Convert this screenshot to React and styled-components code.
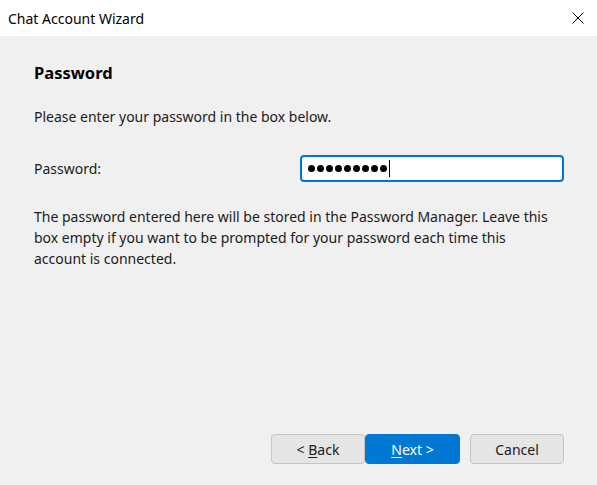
import React from "react";
import styled, { createGlobalStyle } from "styled-components";

const Global = createGlobalStyle`
  html, body { margin: 0; padding: 0; height: 100%; }
  body { background: #f0f0f0; font-family: "Noto Sans", "Open Sans", sans-serif; color: #1b1b1b; }
  #root { height: 100%; }
`;

const Window = styled.div`
  display: flex;
  flex-direction: column;
  height: 100vh;
  background: #f0f0f0;
`;

const TitleBar = styled.div`
  height: 36px;
  background: #ffffff;
  display: flex;
  align-items: center;
  justify-content: space-between;
  padding: 0 13px 0 8px;
  box-sizing: border-box;
`;

const Title = styled.span`
  font-size: 14px;
  color: #000;
`;

const CloseBtn = styled.span`
  display: flex;
  width: 12px;
  height: 12px;
`;

const Content = styled.div`
  flex: 1;
  display: flex;
  flex-direction: column;
  padding: 24px 33px 21px 34px;
`;

const Heading = styled.h1`
  margin: 0;
  font-size: 16.5px;
  font-weight: 700;
  line-height: 26px;
  color: #000;
`;

const Text = styled.p`
  margin: ${(p) => p.$mt || 0}px 0 0;
  font-size: 14px;
  line-height: 21px;
  max-width: 522px;
`;

const Row = styled.div`
  display: flex;
  align-items: center;
  justify-content: space-between;
  margin-top: 28px;
`;

const Input = styled.div`
  width: 264px;
  height: 27px;
  box-sizing: border-box;
  border: 2px solid #0078d4;
  border-radius: 4px;
  background: #fff;
  display: flex;
  align-items: center;
  padding-left: 6px;
  gap: 2px;
`;

const Dot = styled.span`
  width: 7px;
  height: 7px;
  border-radius: 50%;
  background: #000;
`;

const Caret = styled.span`
  width: 1px;
  height: 17px;
  background: #000;
`;

const Footer = styled.div`
  margin-top: auto;
  display: flex;
  justify-content: flex-end;
`;

const Button = styled.button`
  width: ${(p) => p.$w || 94}px;
  height: 30px;
  box-sizing: border-box;
  font-family: inherit;
  font-size: 14px;
  border-radius: 4px;
  border: 1px solid ${(p) => (p.$primary ? "#0078d4" : "#c4c4c4")};
  background: ${(p) => (p.$primary ? "#0078d4" : "#e5e5e5")};
  color: ${(p) => (p.$primary ? "#fff" : "#1b1b1b")};
  margin-left: ${(p) => p.$ml || 0}px;
  padding: 0;
  display: flex;
  align-items: center;
  justify-content: center;
`;

const U = styled.span`
  text-decoration: underline;
  text-underline-offset: 2px;
`;

export default function App() {
  return (
    <Window>
      <Global />
      <TitleBar>
        <Title>Chat Account Wizard</Title>
        <CloseBtn>
          <svg width="12" height="12" viewBox="0 0 12 12">
            <path d="M0.5 0.5 L11.5 11.5 M11.5 0.5 L0.5 11.5" stroke="#000" strokeWidth="1" />
          </svg>
        </CloseBtn>
      </TitleBar>
      <Content>
        <Heading>Password</Heading>
        <Text $mt={20}>Please enter your password in the box below.</Text>
        <Row>
          <Text>Password:</Text>
          <Input>
            {Array.from({ length: 9 }).map((_, i) => (
              <Dot key={i} />
            ))}
            <Caret />
          </Input>
        </Row>
        <Text $mt={24}>
          The password entered here will be stored in the Password Manager. Leave this
          box empty if you want to be prompted for your password each time this
          account is connected.
        </Text>
        <Footer>
          <Button>
            &lt;&nbsp;<U>B</U>ack
          </Button>
          <Button $primary $w={95}>
            <U>N</U>ext &gt;
          </Button>
          <Button $ml={10}>Cancel</Button>
        </Footer>
      </Content>
    </Window>
  );
}
